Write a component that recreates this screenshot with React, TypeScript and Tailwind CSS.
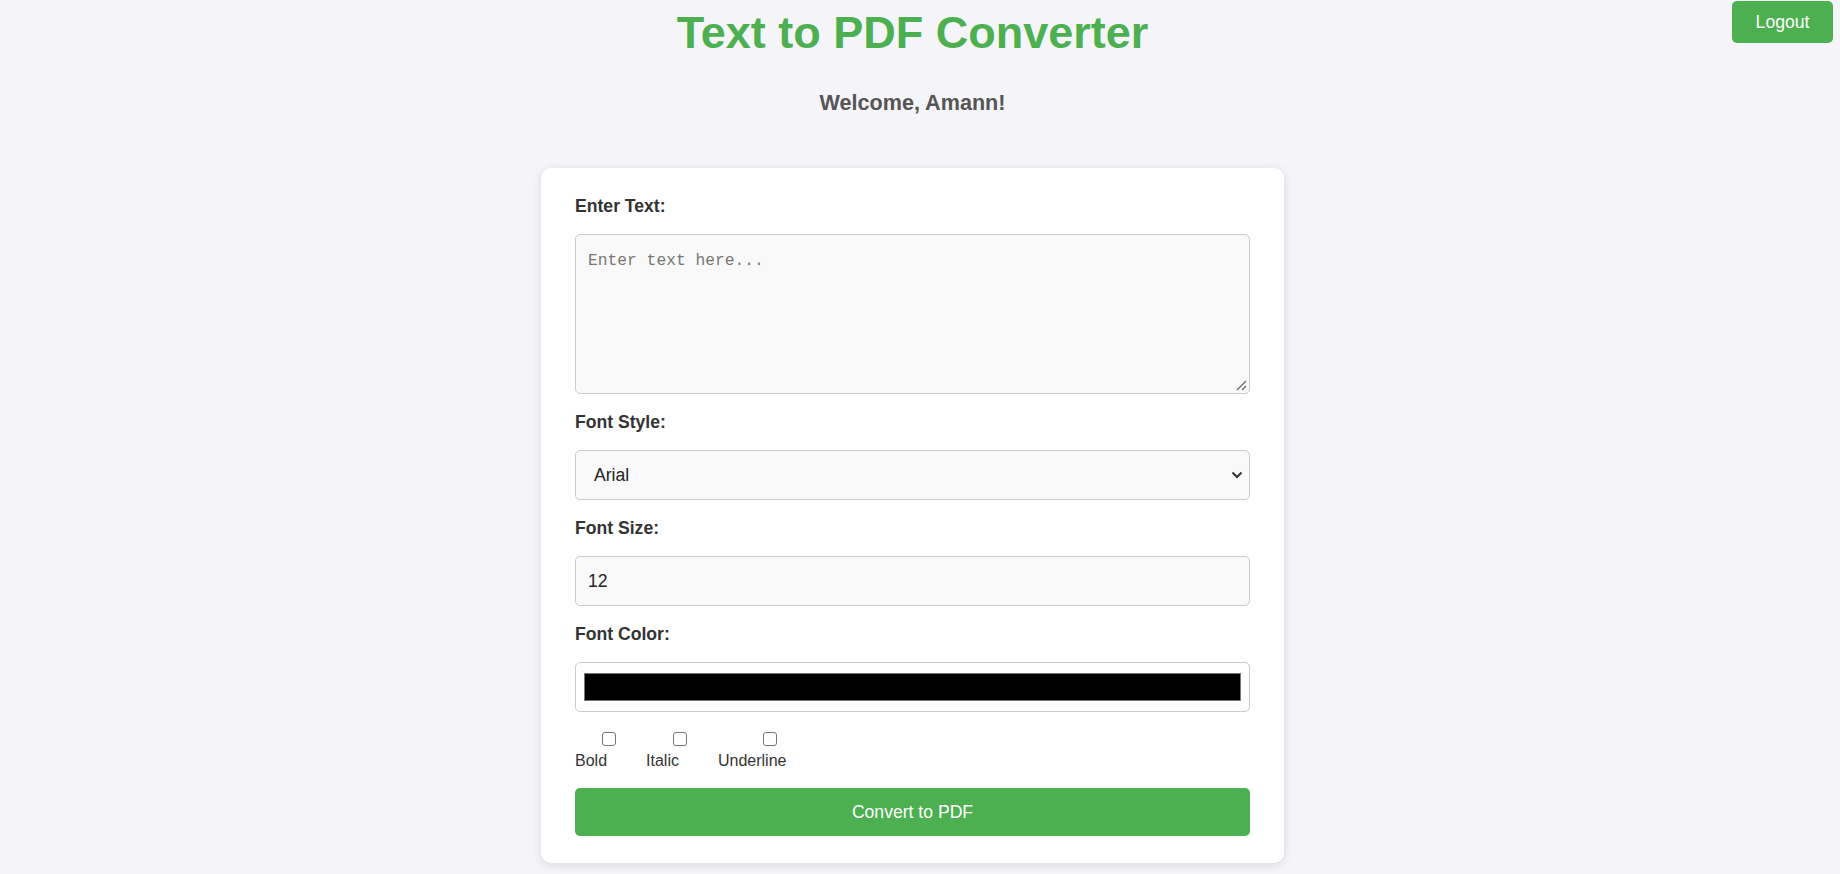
function Checkbox({ label }: { label: string }) {
  return (
    <label className="flex flex-col">
      <span className="flex justify-center pt-[2px]">
        <span className="block w-[14px] h-[14px] rounded-[3px] border border-[#767676] bg-white" />
      </span>
      <span className="mt-[6px] pr-[35px] text-[16px] leading-[18px] text-[#333]">{label}</span>
    </label>
  );
}

function App() {
  return (
    <div
      className="relative w-full min-h-screen bg-[#f4f4f9] pr-[15px] flex flex-col items-center"
      style={{ fontFamily: '"Liberation Sans", Arial, sans-serif' }}
    >
      {/* Logout */}
      <button className="absolute top-[1px] right-[7px] w-[101px] h-[42px] rounded-[5px] bg-[#4CAF50] text-white text-[17.6px]">
        Logout
      </button>

      {/* Header */}
      <h1 className="pt-[8px] text-[45px] leading-[50px] font-bold text-[#4CAF50]">
        Text to PDF Converter
      </h1>
      <h2 className="mt-[33px] text-[21.6px] leading-[24px] font-bold text-[#555]">
        Welcome, Amann!
      </h2>

      {/* Card */}
      <div className="mt-[53px] w-[743px] bg-white rounded-[10px] shadow-[0_2px_10px_rgba(0,0,0,0.12)] px-[34px] pt-[28px] pb-[27px] flex flex-col gap-[18px]">
        <label className="block text-[17.6px] leading-[20px] font-bold text-[#333]">Enter Text:</label>
        <div className="relative h-[160px] rounded-[5px] border border-[#ccc] bg-[#f9f9f9] px-[12px] pt-[13px]">
          <span
            className="text-[16.3px] leading-[24px] text-[#777]"
            style={{ fontFamily: '"Liberation Mono", monospace' }}
          >
            Enter text here...
          </span>
          <svg className="absolute right-[2px] bottom-[2px]" width="11" height="11" viewBox="0 0 11 11">
            <line x1="10" y1="1" x2="1" y2="10" stroke="#666" strokeWidth="1.2" />
            <line x1="10" y1="6" x2="6" y2="10" stroke="#666" strokeWidth="1.2" />
          </svg>
        </div>

        <label className="block text-[17.6px] leading-[20px] font-bold text-[#333]">Font Style:</label>
        <div className="h-[50px] rounded-[5px] border border-[#ccc] bg-[#f9f9f9] pl-[18px] pr-[6px] flex items-center justify-between">
          <span className="text-[17.6px] text-[#222]">Arial</span>
          <svg width="12" height="8" viewBox="0 0 12 8">
            <polyline points="1.5,1.5 6,6 10.5,1.5" fill="none" stroke="#333" strokeWidth="2" />
          </svg>
        </div>

        <label className="block text-[17.6px] leading-[20px] font-bold text-[#333]">Font Size:</label>
        <div className="h-[50px] rounded-[5px] border border-[#ccc] bg-[#f9f9f9] px-[12px] flex items-center">
          <span className="text-[17.6px] text-[#222]">12</span>
        </div>

        <label className="block text-[17.6px] leading-[20px] font-bold text-[#333]">Font Color:</label>
        <div className="h-[50px] rounded-[5px] border border-[#ccc] bg-white px-[8px] flex items-center">
          <div className="w-full h-[28px] border border-[#777] bg-black" />
        </div>

        <div className="flex gap-[4px]">
          <Checkbox label="Bold" />
          <Checkbox label="Italic" />
          <Checkbox label="Underline" />
        </div>

        <button className="h-[48px] rounded-[5px] bg-[#4CAF50] text-white text-[17.6px]">
          Convert to PDF
        </button>
      </div>
    </div>
  );
}

export default App;
